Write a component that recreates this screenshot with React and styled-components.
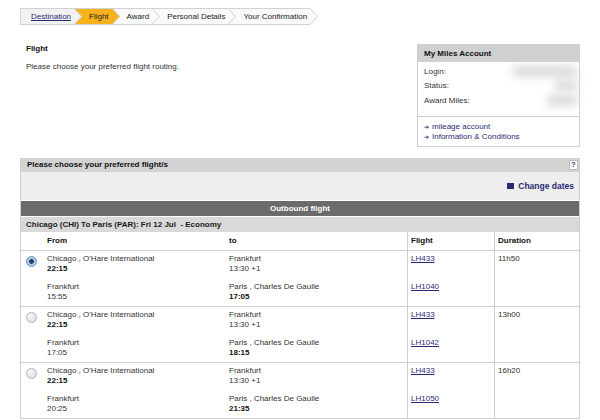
import styled, { createGlobalStyle } from "styled-components";

const GlobalStyle = createGlobalStyle`
  body {
    margin: 0;
    background: #fff;
    font-family: "Liberation Sans", Arial, sans-serif;
    font-size: 8px;
    color: #333;
  }
  * { box-sizing: border-box; }
`;

const Page = styled.div`
  width: 600px;
  height: 420px;
  overflow: hidden;
  padding: 8px 20px 0;
`;

/* breadcrumb */
const Crumbs = styled.nav`
  display: flex;
  height: 17px;
`;

const Step = styled.div`
  display: flex;
  align-items: center;
  height: 17px;
  padding: 0 3px 0 ${(p) => (p.$first ? "10px" : "7px")};
  background: ${(p) => p.$bg};
  border-top: 1px solid #d2d2d2;
  border-bottom: 1px solid #d2d2d2;
  border-left: ${(p) => (p.$first ? "1px solid #d2d2d2" : "none")};
  color: #222;
  white-space: nowrap;
`;

const CrumbLink = styled.a`
  color: #2b2b73;
  text-decoration: underline;
`;

const Chevron = ({ left, right, last }) => (
  <svg width="8" height="17" viewBox="0 0 8 17" style={{ display: "block", flex: "none" }}>
    <rect x="0" y="0" width="8" height="17" fill={right} />
    <polygon points="0,0 8,8.5 0,17" fill={left} />
    {!last && <line x1="0" y1="0.5" x2="8" y2="0.5" stroke="#d2d2d2" />}
    {!last && <line x1="0" y1="16.5" x2="8" y2="16.5" stroke="#d2d2d2" />}
    <polyline points="0,0.5 7.5,8.5 0,16.5" fill="none" stroke="#cfcfcf" />
  </svg>
);

/* top section */
const Top = styled.div`
  display: flex;
  justify-content: space-between;
  align-items: flex-start;
  margin-top: 19px;
`;

const Intro = styled.div`
  padding-left: 6px;
  line-height: 10px;
`;

const Title = styled.div`
  font-weight: bold;
  color: #111;
`;

const Lead = styled.p`
  margin: 8px 0 0;
`;

const MilesBox = styled.div`
  width: 163px;
  border: 1px solid #cfcfcf;
`;

const MilesHead = styled.div`
  height: 17px;
  line-height: 17px;
  padding-left: 6px;
  background: #d0d0d0;
  font-weight: bold;
  color: #111;
`;

const MilesBody = styled.div`
  padding: 2px 6px 8px;
`;

const MilesRow = styled.div`
  display: flex;
  justify-content: space-between;
  align-items: center;
  height: 14.5px;
`;

const Blur = styled.span`
  display: inline-block;
  width: ${(p) => p.$w}px;
  height: 11px;
  background: #cfcfcf;
  filter: blur(4px);
  opacity: 0.75;
  margin-right: -4px;
`;

const MilesLinks = styled.div`
  border-top: 1px solid #cfcfcf;
  padding: 5px 6px 3px;
  line-height: 10.5px;
`;

const ArrowLink = styled.a`
  display: block;
  color: #2b2b73;
  text-decoration: none;
  &::before {
    content: "➔";
    font-size: 6px;
    margin-right: 3px;
    color: #2b2b73;
  }
`;

/* flight table */
const Panel = styled.section`
  margin-top: 11px;
  border-left: 1px solid #cfcfcf;
  border-right: 1px solid #cfcfcf;
`;

const SectionBar = styled.div`
  display: flex;
  justify-content: space-between;
  align-items: center;
  height: 14px;
  padding: 0 1px 0 6px;
  background: #d3d3d3;
  font-weight: bold;
  color: #111;
`;

const Help = styled.span`
  width: 9px;
  height: 10px;
  background: #fff;
  border: 1px solid #bbb;
  color: #2b2b73;
  font-size: 7px;
  font-weight: bold;
  line-height: 8px;
  text-align: center;
`;

const Toolbar = styled.div`
  display: flex;
  justify-content: flex-end;
  align-items: center;
  height: 28px;
  padding-right: 5px;
  background: #eeeeee;
`;

const ChangeDates = styled.a`
  display: flex;
  align-items: center;
  gap: 4px;
  color: #2b2b73;
  font-weight: bold;
  font-size: 8.5px;
  &::before {
    content: "";
    width: 7px;
    height: 6px;
    background: #2b2b73;
  }
`;

const DarkBar = styled.div`
  margin-top: 1px;
  height: 15px;
  line-height: 15px;
  background: #6b6b6b;
  color: #fff;
  font-weight: bold;
  text-align: center;
`;

const RouteBar = styled.div`
  margin-top: 1px;
  height: 15px;
  line-height: 15px;
  padding-left: 5px;
  background: #d9d9d9;
  color: #1a1a1a;
  font-weight: bold;
`;

const Grid = styled.div`
  display: grid;
  grid-template-columns: 21px 182px 183px 87px 1fr;
  border-bottom: 1px solid #cfcfcf;
`;

const HeadCell = styled.div`
  height: 18px;
  line-height: 17px;
  padding-left: ${(p) => (p.$line ? "3px" : "5px")};
  border-left: ${(p) => (p.$line ? "1px solid #cfcfcf" : "none")};
  font-weight: bold;
  color: #111;
`;

const Cell = styled.div`
  display: flex;
  flex-direction: column;
  gap: 8px;
  height: 55px;
  padding: 3px 0 0 ${(p) => (p.$line ? "3px" : "5px")};
  border-left: ${(p) => (p.$line ? "1px solid #cfcfcf" : "none")};
  line-height: 10px;
`;

const RadioCell = styled.div`
  padding: 5px 0 0 5px;
`;

const Radio = styled.span`
  display: block;
  width: 11px;
  height: 11px;
  border-radius: 50%;
  border: 1px solid ${(p) => (p.$on ? "#6d8fb5" : "#b5b5b5")};
  background: ${(p) =>
    p.$on
      ? "radial-gradient(circle at 50% 50%, #1f3e63 0 2px, #9bbbe0 2.5px, #d8e6f5 100%)"
      : "radial-gradient(circle at 40% 35%, #fafafa, #d6d6d6)"};
`;

const Seg = styled.div`
  height: 20px;
`;

const Time = styled.div`
  font-weight: ${(p) => (p.$bold ? "bold" : "normal")};
  color: ${(p) => (p.$bold ? "#111" : "#333")};
`;

const FlightLink = styled.a`
  color: #2b2b73;
  text-decoration: underline;
`;

const rows = [
  {
    on: true,
    dur: "11h50",
    segs: [
      { from: "Chicago , O'Hare International", dep: "22:15", to: "Frankfurt", arr: "13:30 +1", no: "LH433" },
      { from: "Frankfurt", dep: "15:55", to: "Paris , Charles De Gaulle", arr: "17:05", no: "LH1040" },
    ],
  },
  {
    dur: "13h00",
    segs: [
      { from: "Chicago , O'Hare International", dep: "22:15", to: "Frankfurt", arr: "13:30 +1", no: "LH433" },
      { from: "Frankfurt", dep: "17:05", to: "Paris , Charles De Gaulle", arr: "18:15", no: "LH1042" },
    ],
  },
  {
    dur: "16h20",
    segs: [
      { from: "Chicago , O'Hare International", dep: "22:15", to: "Frankfurt", arr: "13:30 +1", no: "LH433" },
      { from: "Frankfurt", dep: "20:25", to: "Paris , Charles De Gaulle", arr: "21:35", no: "LH1050" },
    ],
  },
];

const FlightRow = ({ row }) => (
  <Grid>
    <RadioCell>
      <Radio $on={row.on} />
    </RadioCell>
    <Cell>
      {row.segs.map((s, i) => (
        <Seg key={i}>
          <div>{s.from}</div>
          <Time $bold={i === 0}>{s.dep}</Time>
        </Seg>
      ))}
    </Cell>
    <Cell>
      {row.segs.map((s, i) => (
        <Seg key={i}>
          <div>{s.to}</div>
          <Time $bold={i === row.segs.length - 1}>{s.arr}</Time>
        </Seg>
      ))}
    </Cell>
    <Cell $line>
      {row.segs.map((s, i) => (
        <Seg key={i}>
          <FlightLink href="#">{s.no}</FlightLink>
        </Seg>
      ))}
    </Cell>
    <Cell $line>
      <Seg>{row.dur}</Seg>
    </Cell>
  </Grid>
);

export default function App() {
  return (
    <Page>
      <GlobalStyle />
      <Crumbs>
        <Step $first $bg="#f2f2f2">
          <CrumbLink href="#">Destination</CrumbLink>
        </Step>
        <Chevron left="#f2f2f2" right="#f6b11c" />
        <Step $bg="#f6b11c">Flight</Step>
        <Chevron left="#f6b11c" right="#fafafa" />
        <Step $bg="#fafafa">Award</Step>
        <Chevron left="#fafafa" right="#fafafa" />
        <Step $bg="#fafafa">Personal Details</Step>
        <Chevron left="#fafafa" right="#fafafa" />
        <Step $bg="#fafafa">Your Confirmation</Step>
        <Chevron left="#fafafa" right="#fff" last />
      </Crumbs>

      <Top>
        <Intro>
          <Title>Flight</Title>
          <Lead>Please choose your preferred flight routing.</Lead>
        </Intro>
        <MilesBox>
          <MilesHead>My Miles Account</MilesHead>
          <MilesBody>
            <MilesRow>
              Login:
              <Blur $w={64} />
            </MilesRow>
            <MilesRow>
              Status:
              <Blur $w={22} />
            </MilesRow>
            <MilesRow>
              Award Miles:
              <Blur $w={30} />
            </MilesRow>
          </MilesBody>
          <MilesLinks>
            <ArrowLink href="#">mileage account</ArrowLink>
            <ArrowLink href="#">Information &amp; Conditions</ArrowLink>
          </MilesLinks>
        </MilesBox>
      </Top>

      <Panel>
        <SectionBar>
          Please choose your preferred flight/s
          <Help>?</Help>
        </SectionBar>
        <Toolbar>
          <ChangeDates>Change dates</ChangeDates>
        </Toolbar>
        <DarkBar>Outbound flight</DarkBar>
        <RouteBar>Chicago (CHI) To Paris (PAR): Fri 12 Jul&nbsp; - Economy</RouteBar>
        <Grid>
          <HeadCell />
          <HeadCell>From</HeadCell>
          <HeadCell>to</HeadCell>
          <HeadCell $line>Flight</HeadCell>
          <HeadCell $line>Duration</HeadCell>
        </Grid>
        {rows.map((r, i) => (
          <FlightRow key={i} row={r} />
        ))}
      </Panel>
    </Page>
  );
}
